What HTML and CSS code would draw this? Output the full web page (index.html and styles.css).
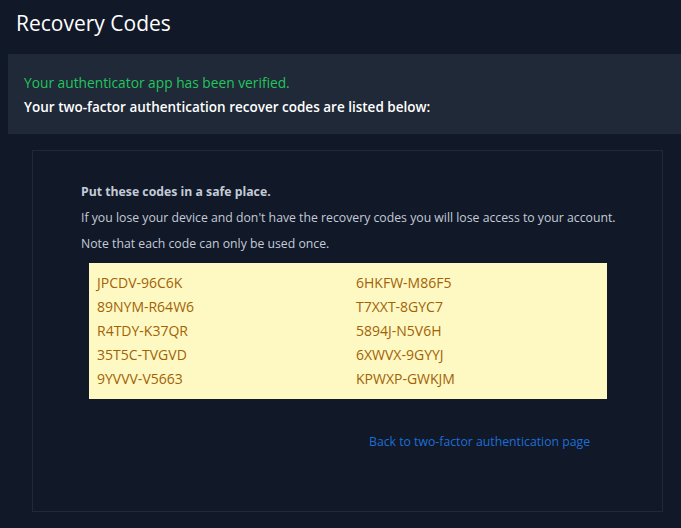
FILE: index.html
```html
<!DOCTYPE html>
<html>
<head>
<meta charset="utf-8">
<link rel="stylesheet" href="styles.css">
</head>
<body>
<main class="page">
  <h1 class="title">Recovery Codes</h1>
  <section class="status">
    <p class="verified">Your authenticator app has been verified.</p>
    <p class="listed">Your two-factor authentication recover codes are listed below:</p>
  </section>
  <section class="card">
    <p class="strong">Put these codes in a safe place.</p>
    <p class="note">If you lose your device and don't have the recovery codes you will lose access to your account.</p>
    <p class="note">Note that each code can only be used once.</p>
    <div class="codes">
      <span>JPCDV-96C6K</span><span>6HKFW-M86F5</span>
      <span>89NYM-R64W6</span><span>T7XXT-8GYC7</span>
      <span>R4TDY-K37QR</span><span>5894J-N5V6H</span>
      <span>35T5C-TVGVD</span><span>6XWVX-9GYYJ</span>
      <span>9YVVV-V5663</span><span>KPWXP-GWKJM</span>
    </div>
    <div class="back"><a href="#" class="back-link">Back to two-factor authentication page</a></div>
  </section>
</main>
</body>
</html>
```
FILE: styles.css
```css
html, body {
  margin: 0;
  padding: 0;
  background: #111827;
  font-family: "Open Sans", "Noto Sans", sans-serif;
}
.page {
  padding: 0 0 0 8px;
  overflow: hidden;
  height: 528px;
  box-sizing: border-box;
}
.title {
  margin: 0;
  padding: 9px 0 0 8px;
  height: 54px;
  box-sizing: border-box;
  font-size: 21px;
  font-weight: 400;
  color: #ffffff;
}
.status {
  background: #1f2937;
  height: 80px;
  box-sizing: border-box;
  padding: 16px 16px 0 16px;
}
.status p {
  margin: 0;
  line-height: 25px;
}
.verified {
  color: #22c55e;
  font-size: 13.75px;
}
.listed {
  color: #ffffff;
  font-weight: 600;
  font-size: 13.5px;
}
.card {
  margin: 16px 18px 0 24px;
  border: 1px solid #1f2937;
  height: 362px;
  box-sizing: border-box;
  padding: 28px 20px 0 48px;
}
.card p {
  margin: 0;
  font-size: 12.25px;
  line-height: 26px;
  color: #c3cbd8;
  white-space: nowrap;
}
.card .strong {
  font-weight: 700;
}
.codes {
  margin: 6px 0 0 8px;
  width: 518px;
  background: #fef9c3;
  display: grid;
  grid-template-columns: 1fr 1fr;
  padding: 8px 0 8px 0;
}
.codes span {
  padding-left: 8px;
  font-size: 14px;
  line-height: 24px;
  color: #a16207;
}
.back {
  margin-top: 30px;
  padding-left: 288px;
}
.back-link {
  font-size: 12.25px;
  color: #1d6fd8;
  text-decoration: none;
}
```
